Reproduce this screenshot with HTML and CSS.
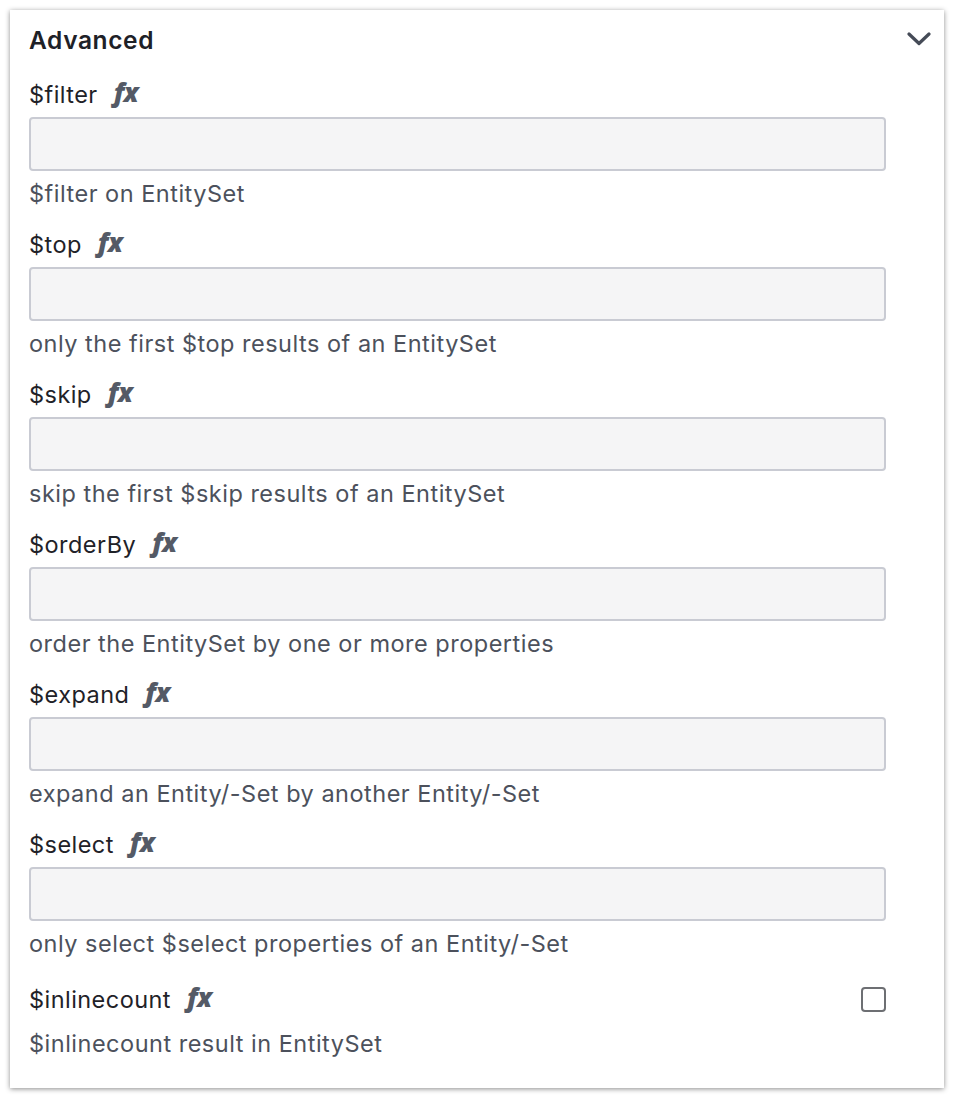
FILE: index.html
```html
<!DOCTYPE html>
<html>
<head>
<meta charset="utf-8">
<link rel="stylesheet" href="styles.css">
</head>
<body>
<section class="card">
  <header class="card-head">
    <h2 class="title">Advanced</h2>
    <svg class="chevron" width="24" height="16" viewBox="0 0 24 16"><path d="M2 3 L12 12.5 L22 3" fill="none" stroke="#454b57" stroke-width="3.2" stroke-linecap="round" stroke-linejoin="round"/></svg>
  </header>

  <div class="field">
    <div class="label"><span>$filter</span><span class="fx">fx</span></div>
    <div class="input"></div>
    <div class="desc">$filter on EntitySet</div>
  </div>
  <div class="field">
    <div class="label"><span>$top</span><span class="fx">fx</span></div>
    <div class="input"></div>
    <div class="desc">only the first $top results of an EntitySet</div>
  </div>
  <div class="field">
    <div class="label"><span>$skip</span><span class="fx">fx</span></div>
    <div class="input"></div>
    <div class="desc">skip the first $skip results of an EntitySet</div>
  </div>
  <div class="field">
    <div class="label"><span>$orderBy</span><span class="fx">fx</span></div>
    <div class="input"></div>
    <div class="desc">order the EntitySet by one or more properties</div>
  </div>
  <div class="field">
    <div class="label"><span>$expand</span><span class="fx">fx</span></div>
    <div class="input"></div>
    <div class="desc">expand an Entity/-Set by another Entity/-Set</div>
  </div>
  <div class="field">
    <div class="label"><span>$select</span><span class="fx">fx</span></div>
    <div class="input"></div>
    <div class="desc">only select $select properties of an Entity/-Set</div>
  </div>
  <div class="field check-field">
    <div class="check-row">
      <div class="label"><span>$inlinecount</span><span class="fx">fx</span></div>
      <span class="checkbox"></span>
    </div>
    <div class="desc">$inlinecount result in EntitySet</div>
  </div>
</section>
</body>
</html>
```

FILE: styles.css
```css
* { box-sizing: border-box; }
html, body { margin: 0; padding: 0; background: #ffffff; }
body {
  padding: 10px;
  font-family: "Inter", "Noto Sans", sans-serif;
  color: #1f2228;
}
.card {
  width: 934px;
  height: 1078px;
  background: #fff;
  box-shadow: 0 1px 5px rgba(0,0,0,0.45);
  padding: 12px 58px 0 19px;
  display: flex;
  flex-direction: column;
  gap: 20px;
}
.card-head {
  display: flex;
  align-items: center;
  justify-content: space-between;
  height: 36px;
  margin-right: -47px;
  margin-bottom: 1px;
}
.title {
  margin: 0;
  font-size: 24.5px;
  font-weight: 600;
  letter-spacing: 0.6px;
  line-height: 36px;
  color: #1e2127;
}
.chevron { display: block; margin-top: -3px; margin-right: 2px; }
.field {
  display: flex;
  flex-direction: column;
}
.label {
  display: flex;
  align-items: center;
  height: 30px;
  font-size: 23.5px;
  letter-spacing: 0.45px;
  color: #1f2228;
}
.fx {
  font-family: "Open Sans", "Noto Sans", sans-serif;
  font-style: italic;
  font-weight: 800;
  font-size: 26px;
  color: #545a66;
  margin-left: 16px;
  margin-top: -5px;
  letter-spacing: -0.5px;
}
.input {
  margin-top: 8px;
  height: 54px;
  background: #f5f5f6;
  border: 2px solid #c9cbd3;
  border-radius: 4px;
}
.desc {
  margin-top: 8px;
  height: 30px;
  line-height: 30px;
  font-size: 23.5px;
  letter-spacing: 0.5px;
  color: #4c515c;
}
.check-field { margin-top: 5px; }
.check-row {
  display: flex;
  align-items: center;
  justify-content: space-between;
}
.checkbox {
  width: 25px;
  height: 25px;
  border: 2px solid #6d6f73;
  border-radius: 4px;
  margin-top: 1px;
}
.check-field .desc { margin-top: 15px; }
```
